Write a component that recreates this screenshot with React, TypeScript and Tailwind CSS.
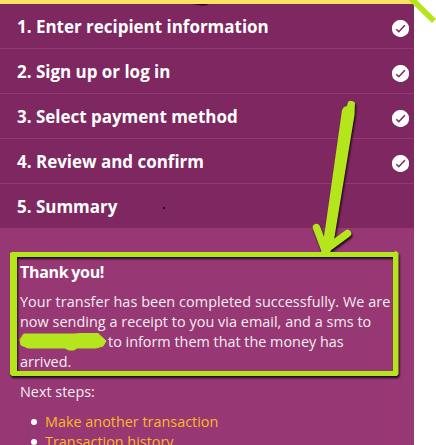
import React from 'react';

const steps = [
  { title: '1. Enter recipient information', done: true },
  { title: '2. Sign up or log in', done: true },
  { title: '3. Select payment method', done: true },
  { title: '4. Review and confirm', done: true },
  { title: '5. Summary', done: false },
];

function CheckBadge() {
  return (
    <svg className="mt-[5px] h-[17px] w-[17px]" viewBox="0 0 17 17" fill="none">
      <circle cx="8.5" cy="8.5" r="8.6" fill="#fff" />
      <path d="M4.300 9.200 6.800 11.700 12.900 5.300" stroke="#7f2761" strokeWidth="1.6" />
    </svg>
  );
}

function Annotations() {
  return (
    <svg
      className="pointer-events-none absolute inset-0 h-[445px] w-[436px]"
      viewBox="0 0 436 445"
      fill="none"
      stroke="#b5e61d"
      strokeLinecap="round"
      strokeLinejoin="round"
    >
      <g className="[filter:drop-shadow(1px_2px_1px_rgba(0,0,0,0.85))]">
        <path d="M12 252H394L396 251L398.500 253V374L397 376H12L10 374V253ZM17 257V371H393V257Z" fill="#b5e61d" fillRule="evenodd" stroke="none" />
        <path d="M342 110 344 107 347 106 348 102Q351 99.500 355 102.500L354.500 115 334 240 330 253H321L325 230Z" fill="#b5e61d" stroke="none" />
        <path d="M316.500 227.500 325 250 347.500 233.500" strokeWidth="7.500" />
      </g>
      <path d="M409.500-3 434 21" strokeWidth="5.800" strokeLinecap="butt" />
      <path d="M24 334H75L81 333.500H98L106 341 103 346 96 348H77L74 350H69L65 348H28L21 345 20 340Z" fill="#b5e61d" strokeWidth="1" />
    </svg>
  );
}

export default function App() {
  return (
    <div className="relative h-[445px] w-[436px] overflow-hidden bg-white font-['Open_Sans',sans-serif] text-white">
      <div className="h-1 w-[413px] bg-[#f9e264]" />
      <main className="h-[441px] w-[414px] overflow-hidden bg-[#973874]">
        <ol className="bg-[#7f2761]">
          {steps.map((step) => (
            <li
              key={step.title}
              className="flex h-[45px] items-center justify-between border-b border-[#973874] pr-[5px] pl-[17px] last:h-11 last:border-b-0"
            >
              <h2 className="pt-0.5 text-[17px] leading-6 font-bold tracking-[-0.02px] whitespace-nowrap">{step.title}</h2>
              {step.done && <CheckBadge />}
            </li>
          ))}
        </ol>
        <section className="px-5 pt-[34px] text-[14.4px] leading-5 text-[#f5edf2]">
          <h3 className="mb-2.5 text-base leading-5 font-bold tracking-[-0.3px] text-white [word-spacing:-1px]">Thank you!</h3>
          <p className="mb-2.5 whitespace-nowrap">
            <span className="tracking-[0.075px]">Your transfer has been completed successfully. We are</span>
            <br />
            <span className="tracking-[0.04px]">now sending a receipt to you via email, and a sms to</span>
            <br />
            <span className="inline-block w-[88px]" />
            to inform them that the money has
            <br />
            arrived.
          </p>
          <p className="mb-2.5">Next steps:</p>
          <ul className="text-[#fcb827]">
            {['Make another transaction', 'Transaction history'].map((label) => (
              <li key={label} className="flex items-center pl-[11px]">
                <span className="mr-2 h-1.5 w-1.5 rounded-full bg-white" />
                {label}
              </li>
            ))}
          </ul>
        </section>
      </main>
      <svg className="absolute top-0 left-[190px] h-1.5 w-6" viewBox="0 0 24 6">
        <path d="M2 4H19Q16 6 11 5.500Z" fill="#28091e" />
      </svg>
      <span className="absolute top-[207px] left-[163px] h-[2px] w-[2px] bg-[#20051a]" />
      <Annotations />
    </div>
  );
}
